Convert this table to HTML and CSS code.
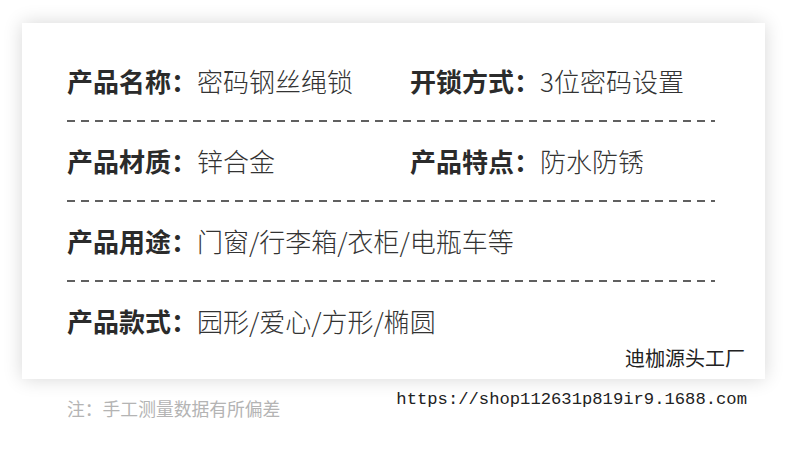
FILE: index.html
```html
<!DOCTYPE html>
<html lang="zh">
<head>
<meta charset="utf-8">
<link rel="stylesheet" href="styles.css">
</head>
<body>
<div class="card">
  <div class="row two">
    <div class="cell"><span class="label">产品名称：</span><span class="value">密码钢丝绳锁</span></div>
    <div class="cell"><span class="label">开锁方式：</span><span class="value">3位密码设置</span></div>
  </div>
  <div class="dash"></div>
  <div class="row two">
    <div class="cell"><span class="label">产品材质：</span><span class="value">锌合金</span></div>
    <div class="cell"><span class="label">产品特点：</span><span class="value">防水防锈</span></div>
  </div>
  <div class="dash"></div>
  <div class="row">
    <div class="cell"><span class="label">产品用途：</span><span class="value">门窗/行李箱/衣柜/电瓶车等</span></div>
  </div>
  <div class="dash"></div>
  <div class="row">
    <div class="cell"><span class="label">产品款式：</span><span class="value">园形/爱心/方形/椭圆</span></div>
  </div>
  <div class="brand">迪枷源头工厂</div>
</div>
<div class="footer">
  <div class="note">注：手工测量数据有所偏差</div>
  <div class="url">https://shop112631p819ir9.1688.com</div>
</div>
</body>
</html>
```
FILE: styles.css
```css
html, body {
  margin: 0;
  padding: 0;
  background: #ffffff;
}
body {
  font-family: "Noto Sans CJK SC", "Noto Sans", sans-serif;
  color: #333333;
  width: 790px;
  height: 451px;
  overflow: hidden;
}
.card {
  margin: 23px 0 0 22px;
  width: 743px;
  height: 356px;
  box-sizing: border-box;
  padding: 38px 20px 0 45px;
  background: #ffffff;
  box-shadow: 0 0 18px rgba(0, 0, 0, 0.16);
  display: flex;
  flex-direction: column;
}
.row {
  display: grid;
  grid-template-columns: 343px 1fr;
  height: 40px;
  align-items: center;
}
.cell {
  font-size: 26px;
  line-height: 40px;
  white-space: nowrap;
}
.label {
  font-weight: 700;
  color: #2b2b2b;
}
.value {
  font-weight: 300;
  color: #333333;
}
.dash {
  width: 648px;
  height: 2px;
  margin: 19px 0 19px 0;
  background: repeating-linear-gradient(to right, #444 0, #444 8px, transparent 8px, transparent 14px);
  opacity: 0.85;
}
.brand {
  align-self: flex-end;
  font-size: 20px;
  line-height: 26px;
  margin-top: 4px;
  color: #222222;
}
.footer {
  display: flex;
  justify-content: space-between;
  align-items: flex-start;
  padding: 0 43px 0 67px;
}
.note {
  margin-top: 17px;
  font-size: 17.8px;
  line-height: 24px;
  color: #b4b4b4;
}
.url {
  margin-top: 10px;
  font-family: "Liberation Mono", monospace;
  font-size: 17.2px;
  line-height: 22px;
  color: #222222;
}
```
